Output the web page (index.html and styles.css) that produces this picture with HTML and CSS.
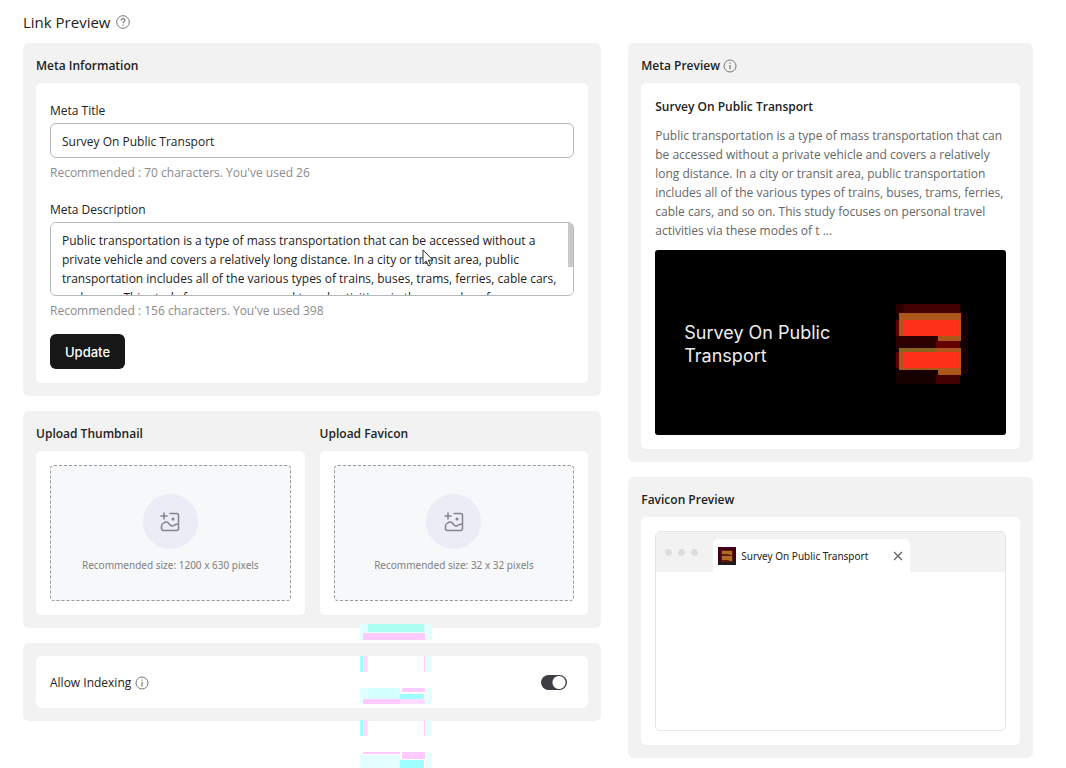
FILE: index.html
```html
<!DOCTYPE html>
<html lang="en">
<head>
<meta charset="utf-8">
<meta name="viewport" content="width=device-width, initial-scale=1">
<title>Link Preview</title>
<link rel="stylesheet" href="styles.css">
</head>
<body>
<svg class="defs" width="0" height="0" aria-hidden="true">
  <symbol id="info" viewBox="0 0 14 14"><circle cx="7" cy="7" r="6" fill="none" stroke="currentColor"/><path d="M7 6v4.200M7 3.600v1.200" stroke="currentColor" stroke-width="1.200" fill="none"/></symbol>
  <symbol id="add-image" viewBox="0 0 20 20"><path d="M4 1v6M1 4h6M10 1.500h6.500a2 2 0 0 1 2 2v13a2 2 0 0 1-2 2h-13a2 2 0 0 1-2-2V14c0-2 3-4 5-4 2.500 0 3 4 5.500 4s2.500-2 6-2" fill="none" stroke="currentColor" stroke-width="1.500" stroke-linecap="round" stroke-linejoin="round"/><circle cx="13" cy="7" r="1.500" fill="currentColor"/></symbol>
</svg>
<main class="page">
  <h1 class="page-title">Link Preview
    <svg class="icon" viewBox="0 0 14 14" aria-hidden="true"><circle cx="7" cy="7" r="6.300" fill="none" stroke="currentColor"/><path d="M5.200 5.500c0-2.500 3.700-2.300 3.700-.2C8.900 6.600 7 6.700 7 8.200M7 9.600v1.200" fill="none" stroke="currentColor" stroke-width="1.200"/></svg>
  </h1>
  <div class="columns">
    <div class="column">
      <section class="panel">
        <h2 class="panel-title">Meta Information</h2>
        <form class="card">
          <label class="label" for="meta-title">Meta Title</label>
          <input class="field" id="meta-title" type="text" value="Survey On Public Transport">
          <p class="hint">Recommended : 70 characters. You've used 26</p>
          <label class="label label-next" for="meta-desc">Meta Description</label>
          <div class="area-wrap">
            <textarea class="field area" id="meta-desc">Public transportation is a type of mass transportation that can be accessed without a private vehicle and covers a relatively long distance. In a city or transit area, public transportation includes all of the various types of trains, buses, trams, ferries, cable cars, and so on. This study focuses on personal travel activities via these modes of transportation.</textarea>
            <span class="thumb"></span>
            <svg class="pointer" viewBox="0 0 12 18" aria-hidden="true"><path d="M1 1v14l3.200-3 2.200 5 2.200-1-2.200-4.800H11z" fill="#fff" stroke="#333"/></svg>
          </div>
          <p class="hint">Recommended : 156 characters. You've used 398</p>
          <button class="update" type="button">Update</button>
        </form>
      </section>
      <section class="panel uploads">
        <div class="upload">
          <h2 class="panel-title">Upload Thumbnail</h2>
          <div class="card">
            <button class="dropzone" type="button"><span class="badge"><svg class="badge-icon" aria-hidden="true"><use href="#add-image"/></svg></span><span>Recommended size: 1200 x 630 pixels</span></button>
          </div>
        </div>
        <div class="upload">
          <h2 class="panel-title">Upload Favicon</h2>
          <div class="card">
            <button class="dropzone" type="button"><span class="badge"><svg class="badge-icon" aria-hidden="true"><use href="#add-image"/></svg></span><span>Recommended size: 32 x 32 pixels</span></button>
          </div>
        </div>
      </section>
      <section class="panel">
        <div class="card indexing">
          <label class="index-label" for="indexing">Allow Indexing <svg class="icon" aria-hidden="true"><use href="#info"/></svg></label>
          <input class="toggle" id="indexing" type="checkbox" role="switch" checked>
        </div>
      </section>
    </div>
    <div class="column">
      <section class="panel">
        <h2 class="panel-title">Meta Preview <svg class="icon" aria-hidden="true"><use href="#info"/></svg></h2>
        <article class="card">
          <h3 class="preview-title">Survey On Public Transport</h3>
          <p class="preview-text">Public transportation is a type of mass transportation that can be accessed without a private vehicle and covers a relatively long distance. In a city or transit area, public transportation includes all of the various types of trains, buses, trams, ferries, cable cars, and so on. This study focuses on personal travel activities via these modes of t ...</p>
          <div class="banner">
            <p class="banner-text">Survey On Public Transport</p>
            <svg class="banner-logo" viewBox="768 191 216 241" shape-rendering="crispEdges" aria-hidden="true">
              <path fill="#160000" d="M768 191h216v241H768z"/>
              <path fill="#000" d="M960 402h24v30h-24zM962 191h22v26h-22z"/>
              <path fill="#430000" d="M792 191h168v28H792zM888 405h72v27h-72z"/>
              <path fill="#2d0000" d="M768 191h24v28h-24zM768 288h126v35H768z"/>
              <path fill="#650000" d="M768 240h10v48h-10zM768 335h10v49h-10zM888 302h72v21h-72z"/>
              <path fill="#ad571c" d="M778 219h185v83h-69v-14H778zM778 323h185v83h-69v-16H778z"/>
              <path fill="#8a6520" d="M778 323h110v12H778z"/>
              <path fill="#ff3019" d="M792 240h168v48H792zM792 335h168v49H792z"/>
            </svg>
          </div>
        </article>
      </section>
      <section class="panel">
        <h2 class="panel-title">Favicon Preview</h2>
        <div class="card">
          <div class="browser">
            <div class="tabbar">
              <div class="dots"><i></i><i></i><i></i></div>
              <div class="tab">
                <svg class="favicon" viewBox="0 0 18 18" aria-hidden="true"><path fill="#430014" d="M0 0h18v18H0z"/><path fill="#201a1a" d="M0 15h18v3H0zM15 11h3v7h-3z"/><path fill="#5b1c0c" d="M3 3h12v12H3z"/><path fill="#b06a24" d="M4 4h10v4h-3v-1H4zM4 9h10v5h-3v-1H4z"/></svg>
                <span>Survey On Public Transport</span>
                <svg class="close" viewBox="0 0 10 10" aria-hidden="true"><path d="M1 1l8 8M9 1L1 9" stroke="#666" stroke-width="1.400"/></svg>
              </div>
            </div>
          </div>
        </div>
      </section>
    </div>
  </div>
  <svg class="blocks" viewBox="60 27 216 432" shape-rendering="crispEdges" aria-hidden="true">
    <path fill="#e4ffff" d="M60 27h216v48h-21V55H70v20H60zM255 123h21v48h-21zM60 219h120v34h75v-34h21v48h-21v-14H70v14H60zM255 315h21v48h-21zM60 420h120v39H60zM255 411h21v48h-21z"/>
    <path fill="#aafff1" d="M84 27h168v24H84z"/>
    <path fill="#d3ffff" d="M84 219h96v34H84z"/>
    <path fill="#9fffff" d="M60 123h9v48h-9zM180 236h72v17h-72zM60 315h9v48h-9zM180 435h72v24h-72z"/>
    <path fill="#ffcbff" d="M70 55h185v20H70zM70 253h110v14H70zM187 219h68v12h-68zM70 411h110v6H70zM187 411h68v22h-68zM252 123h3v48h-3zM252 315h3v48h-3z"/>
    <path fill="#ffdcff" d="M71 123h13v48H71zM180 253h75v14h-75zM71 315h13v48H71z"/>
  </svg>
</main>
</body>
</html>
```
FILE: styles.css
```css
* { box-sizing: border-box; }
body {
  margin: 0;
  background: #fff;
  color: #222;
  font-family: "Segoe UI", "Open Sans", "Noto Sans", sans-serif;
  font-size: 12px;
  line-height: 20px;
}
h1, h2, h3, p { margin: 0; }
button, input, textarea { font: inherit; color: inherit; }
.defs { position: absolute; }
.page { position: relative; padding: 10px 33px 10px 23px; }
.page-title {
  display: flex;
  align-items: center;
  gap: 5px;
  margin-bottom: 9px;
  font-size: 15px;
  font-weight: 400;
  line-height: 24px;
}
.icon { width: 14px; height: 14px; color: #777; flex: none; }
.columns {
  display: grid;
  grid-template-columns: minmax(0, 10fr) minmax(0, 7fr);
  gap: 27px;
  align-items: start;
}
.column { display: grid; gap: 15px; }
.panel { padding: 13px; background: #f2f2f2; border-radius: 6px; min-width: 0; }
.panel-title {
  display: flex;
  align-items: center;
  gap: 3px;
  margin-bottom: 7px;
  font-size: 12px;
  font-weight: 600;
}
.card { padding: 14px; background: #fff; border-radius: 5px; }
.label { display: block; padding-top: 2px; line-height: 24px; }
.label-next { margin-top: 10px; }
.field {
  display: block;
  width: 100%;
  height: 35px;
  padding: 1px 11px 0;
  border: 1px solid #b5b8b8;
  border-radius: 6px;
  background: #fff;
  outline: 0;
}
.area-wrap { position: relative; }
.area { height: 74px; padding: 8px 11px; line-height: 19px; resize: none; scrollbar-width: none; }
.thumb { position: absolute; top: 1px; right: 1px; width: 5px; height: 44px; border-radius: 0 4px 0 0; background: #c9c9c9; }
.pointer { position: absolute; left: 372px; top: 27px; width: 12px; height: 18px; }
.hint { padding-top: 2px; color: #8b8b8b; line-height: 26px; }
.update {
  display: block;
  height: 35px;
  margin-top: 10px;
  padding: 0 15px;
  border: 0;
  border-radius: 6px;
  background: #171717;
  color: #fff;
  font-family: Inter, sans-serif;
  font-size: 13px;
  font-weight: 500;
}
.uploads { display: grid; grid-template-columns: 1fr 1fr; gap: 15px; }
.dropzone {
  display: flex;
  flex-direction: column;
  align-items: center;
  gap: 6px;
  width: 100%;
  height: 136px;
  padding: 28px 8px 0;
  border: 1px dashed #999;
  border-radius: 4px;
  background: #f7f8fa;
  color: #808080;
  font-family: "Noto Sans", sans-serif;
  font-size: 10px;
}
.badge {
  display: grid;
  place-items: center;
  width: 55px;
  height: 55px;
  border-radius: 50%;
  background: #ebecf6;
}
.badge-icon { width: 20px; height: 20px; color: #858589; }
.indexing { display: flex; align-items: center; justify-content: space-between; padding: 15px 21px 15px 14px; }
.index-label { display: flex; align-items: center; gap: 4px; padding-top: 2px; }
.toggle {
  appearance: none;
  width: 26px;
  height: 15px;
  margin: 0;
  border-radius: 8px;
  background: radial-gradient(circle at 18px 50%, #fff 6px, #3d3f45 7px);
}
.preview-title { font-size: 12px; font-weight: 600; }
.preview-text { margin: 9px 0 10px; color: #666; line-height: 19px; }
.banner {
  display: flex;
  align-items: center;
  justify-content: space-between;
  height: 185px;
  padding: 2px 38px 0 29px;
  border-radius: 3px;
  background: #000;
  color: #eee;
}
.banner-text { width: 160px; font-family: Inter, sans-serif; font-size: 18px; line-height: 23px; }
.banner-logo { width: 72px; height: 80px; }
.browser { height: 200px; border: 1px solid #e6e6e6; border-radius: 5px; overflow: hidden; }
.tabbar { display: flex; align-items: flex-end; height: 40px; padding-left: 9px; background: #f2f2f2; }
.dots { display: flex; gap: 6px; width: 48px; padding-bottom: 16px; }
.dots i { width: 7px; height: 7px; border-radius: 50%; background: #dedede; }
.tab {
  display: flex;
  align-items: center;
  gap: 5px;
  width: 197px;
  height: 33px;
  padding: 0 7px 0 5px;
  border-radius: 5px 5px 0 0;
  background: #fff;
  font-family: "Noto Sans", sans-serif;
  font-size: 10px;
  white-space: nowrap;
}
.favicon { width: 18px; height: 18px; flex: none; }
.close { width: 10px; height: 10px; margin-left: auto; flex: none; }
.blocks { position: absolute; left: 360px; top: 624px; width: 72px; height: 144px; pointer-events: none; }
```
